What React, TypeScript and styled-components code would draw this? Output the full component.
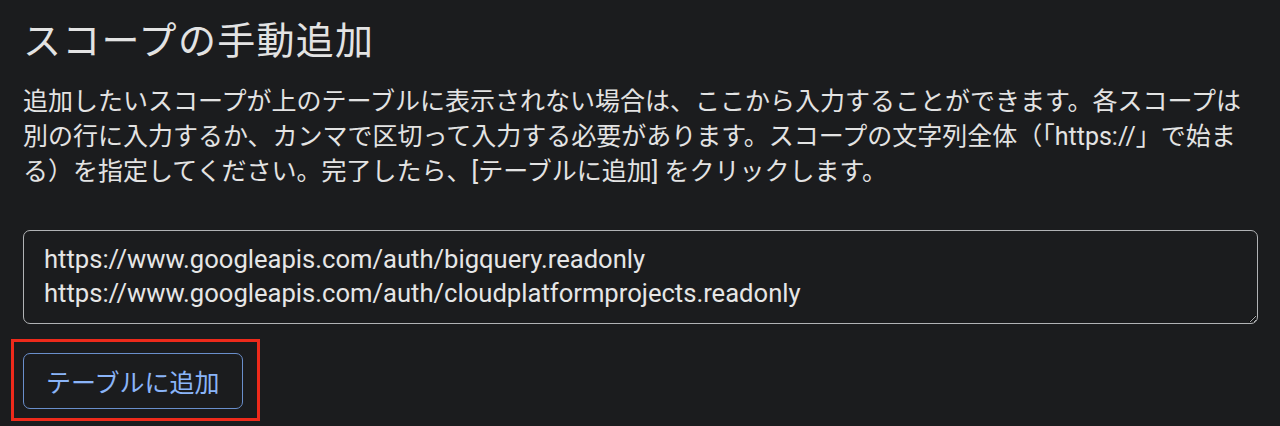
import React from "react";
import styled, { createGlobalStyle } from "styled-components";

const Global = createGlobalStyle`
  html, body {
    margin: 0;
    padding: 0;
    background: #1b1c1e;
  }
  body {
    font-family: Roboto, "Noto Sans CJK JP", sans-serif;
    color: #e3e3e3;
  }
`;

const Page = styled.div`
  width: 1280px;
  height: 426px;
  box-sizing: border-box;
  padding: 13px 22px 0 23px;
  background: #1b1c1e;
  overflow: hidden;
  display: flex;
  flex-direction: column;
`;

const Title = styled.h2`
  margin: 0;
  font-family: "Noto Sans CJK JP", sans-serif;
  font-weight: 400;
  font-size: 38px;
  line-height: 50px;
  color: #e3e3e3;
  letter-spacing: 1.3px;
`;

const Description = styled.p`
  margin: 21px 0 0;
  font-family: Roboto, "Noto Sans CJK JP", sans-serif;
  font-size: 25px;
  line-height: 35px;
  color: #e3e3e3;
  white-space: nowrap;
`;

const ScopeInput = styled.textarea`
  margin-top: 41px;
  width: 1235px;
  height: 94px;
  box-sizing: border-box;
  padding: 11px 20px 13px;
  background: transparent;
  color: #e6e6e6;
  border: 1px solid #b1b3b5;
  border-radius: 7px;
  font-family: Roboto, sans-serif;
  font-size: 25.6px;
  line-height: 34px;
  resize: vertical;
  outline: none;
  overflow: hidden;
  color-scheme: dark;
`;

const Highlight = styled.div`
  position: relative;
  margin-top: 29px;
  align-self: flex-start;
  &::after {
    content: "";
    position: absolute;
    left: -12px;
    top: -14px;
    right: -17px;
    bottom: -12px;
    border: 3.5px solid #ee2a1b;
    pointer-events: none;
  }
`;

const OutlineButton = styled.button`
  display: flex;
  align-items: center;
  justify-content: center;
  height: 56px;
  padding: 0 22px;
  box-sizing: border-box;
  background: transparent;
  border: 1px solid #6a8fcc;
  border-radius: 7px;
  color: #8ab4f8;
  font-family: "Noto Sans CJK JP", sans-serif;
  font-size: 25px;
  cursor: pointer;
`;

const scopes =
  "https://www.googleapis.com/auth/bigquery.readonly\nhttps://www.googleapis.com/auth/cloudplatformprojects.readonly";

export default function App() {
  return (
    <Page>
      <Global />
      <Title>スコープの手動追加</Title>
      <Description>
        追加したいスコープが上のテーブルに表示されない場合は、ここから入力することができます。各スコープは
        <br />
        別の行に入力するか、カンマで区切って入力する必要があります。スコープの文字列全体（「https://」で始ま
        <br />
        る）を指定してください。完了したら、[テーブルに追加] をクリックします。
      </Description>
      <ScopeInput defaultValue={scopes} spellCheck={false} />
      <Highlight>
        <OutlineButton>テーブルに追加</OutlineButton>
      </Highlight>
    </Page>
  );
}
